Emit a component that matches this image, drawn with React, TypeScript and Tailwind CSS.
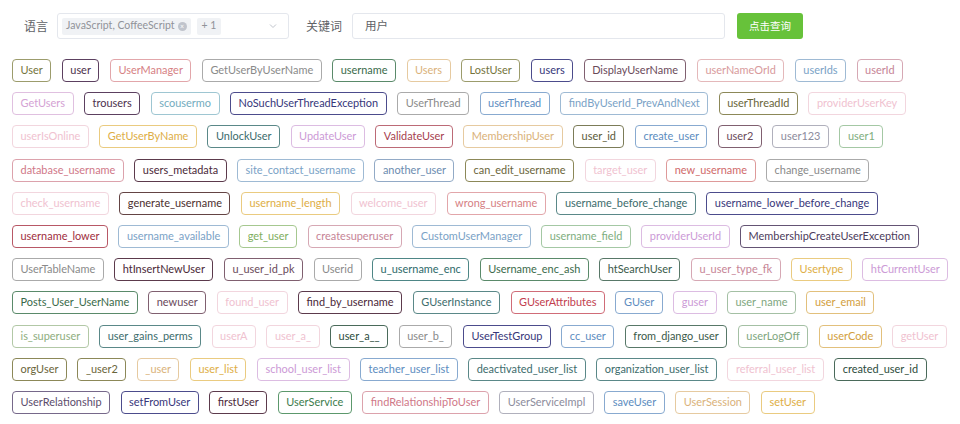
import React from 'react';

// palette: text + border per tone
const T: Record<string, string> = {
  olive: 'text-[#74743c] border-[#9c9c6c]',
  plum: 'text-[#4c304c] border-[#5c4060]',
  rose: 'text-[#d67f84] border-[#e2a6aa]',
  gray: 'text-[#8a8a8a] border-[#aaaaaa]',
  forest: 'text-[#3a6a4a] border-[#5a8a6a]',
  tan: 'text-[#dab27a] border-[#e6caa0]',
  navy: 'text-[#37377a] border-[#4c4c8c]',
  mauve: 'text-[#6a4a5a] border-[#806070]',
  blush: 'text-[#d89a9c] border-[#e4b8ba]',
  sky: 'text-[#7aa2c6] border-[#9ebad4]',
  orchid: 'text-[#c68496] border-[#d6a8b4]',
  lilac: 'text-[#d4a2d4] border-[#e0c0e0]',
  aqua: 'text-[#74acbe] border-[#9ec6d2]',
  blue: 'text-[#5c8cc0] border-[#88aad0]',
  khaki: 'text-[#6a653a] border-[#8c8858]',
  faint: 'text-[#f0c2d0] border-[#f2d6de]',
  gold: 'text-[#deae46] border-[#eacb80]',
  teal: 'text-[#3c6c6c] border-[#5a8888]',
  violet: 'text-[#cc9ad6] border-[#dcbce2]',
  red: 'text-[#a63e4e] border-[#bc6a76]',
  dolive: 'text-[#5c5c3a] border-[#7c7c58]',
  ash: 'text-[#8c8c9c] border-[#b0b0bc]',
  mint: 'text-[#7eae7e] border-[#a4c8a4]',
  pink: 'text-[#d07888] border-[#dca2ac]',
  wine: 'text-[#4a2838] border-[#5c3a4c]',
  slate: 'text-[#6c8cb0] border-[#92aac6]',
  coral: 'text-[#d06a6a] border-[#de9a9a]',
  brown: 'text-[#4c2e2e] border-[#644444]',
  crimson: 'text-[#a02e3e] border-[#b85866]',
  lime: 'text-[#7eae5e] border-[#a6c890]',
  grape: 'text-[#4c3c5c] border-[#645474]',
  dteal: 'text-[#2e6a6a] border-[#4e8686]',
  pine: 'text-[#3a5a4a] border-[#587868]',
  scarlet: 'text-[#c23e4e] border-[#d06c78]',
  sage: 'text-[#7ea67e] border-[#a4c0a4]',
  amber: 'text-[#d29e3c] border-[#e2c07c]',
  pale: 'text-[#8eae7e] border-[#b2c8a6]',
  dgreen: 'text-[#2c4c3c] border-[#4a6a5a]',
  violetgray: 'text-[#5c4c6c] border-[#76688a]',
  moss: 'text-[#3c7c4c] border-[#5c986c]',
};

const rows: [string, string][][] = [
  [['User', 'olive'], ['user', 'plum'], ['UserManager', 'rose'], ['GetUserByUserName', 'gray'], ['username', 'forest'], ['Users', 'tan'], ['LostUser', 'olive'], ['users', 'navy'], ['DisplayUserName', 'mauve'], ['userNameOrId', 'blush'], ['userIds', 'sky'], ['userId', 'orchid']],
  [['GetUsers', 'lilac'], ['trousers', 'plum'], ['scousermo', 'aqua'], ['NoSuchUserThreadException', 'navy'], ['UserThread', 'gray'], ['userThread', 'blue'], ['findByUserId_PrevAndNext', 'sky'], ['userThreadId', 'khaki'], ['providerUserKey', 'faint']],
  [['userIsOnline', 'faint'], ['GetUserByName', 'gold'], ['UnlockUser', 'teal'], ['UpdateUser', 'violet'], ['ValidateUser', 'red'], ['MembershipUser', 'tan'], ['user_id', 'dolive'], ['create_user', 'blue'], ['user2', 'mauve'], ['user123', 'ash'], ['user1', 'mint']],
  [['database_username', 'pink'], ['users_metadata', 'wine'], ['site_contact_username', 'sky'], ['another_user', 'slate'], ['can_edit_username', 'khaki'], ['target_user', 'faint'], ['new_username', 'coral'], ['change_username', 'gray']],
  [['check_username', 'faint'], ['generate_username', 'brown'], ['username_length', 'gold'], ['welcome_user', 'faint'], ['wrong_username', 'rose'], ['username_before_change', 'teal'], ['username_lower_before_change', 'navy']],
  [['username_lower', 'crimson'], ['username_available', 'sky'], ['get_user', 'lime'], ['createsuperuser', 'orchid'], ['CustomUserManager', 'sky'], ['username_field', 'mint'], ['providerUserId', 'violet'], ['MembershipCreateUserException', 'grape']],
  [['UserTableName', 'gray'], ['htInsertNewUser', 'wine'], ['u_user_id_pk', 'mauve'], ['Userid', 'gray'], ['u_username_enc', 'dteal'], ['Username_enc_ash', 'forest'], ['htSearchUser', 'pine'], ['u_user_type_fk', 'orchid'], ['Usertype', 'gold'], ['htCurrentUser', 'violet']],
  [['Posts_User_UserName', 'forest'], ['newuser', 'mauve'], ['found_user', 'faint'], ['find_by_username', 'wine'], ['GUserInstance', 'teal'], ['GUserAttributes', 'scarlet'], ['GUser', 'blue'], ['guser', 'violet'], ['user_name', 'sage'], ['user_email', 'amber']],
  [['is_superuser', 'pale'], ['user_gains_perms', 'teal'], ['userA', 'faint'], ['user_a_', 'faint'], ['user_a__', 'dgreen'], ['user_b_', 'gray'], ['UserTestGroup', 'navy'], ['cc_user', 'blue'], ['from_django_user', 'pine'], ['userLogOff', 'sage'], ['userCode', 'amber'], ['getUser', 'faint']],
  [['orgUser', 'khaki'], ['_user2', 'khaki'], ['_user', 'tan'], ['user_list', 'gold'], ['school_user_list', 'violet'], ['teacher_user_list', 'blue'], ['deactivated_user_list', 'teal'], ['organization_user_list', 'teal'], ['referral_user_list', 'faint'], ['created_user_id', 'dgreen']],
  [['UserRelationship', 'violetgray'], ['setFromUser', 'navy'], ['firstUser', 'wine'], ['UserService', 'moss'], ['findRelationshipToUser', 'pink'], ['UserServiceImpl', 'ash'], ['saveUser', 'blue'], ['UserSession', 'tan'], ['setUser', 'gold']],
];

function Tag({ text, tone }: { text: string; tone: string }) {
  return (
    <span className={`h-[23px] px-[7.5px] flex items-center border rounded-[4px] text-[10.95px] leading-none whitespace-nowrap ${T[tone]}`}>
      {text}
    </span>
  );
}

export default function App() {
  return (
    <div className="w-[960px] h-[424px] bg-white overflow-hidden font-['Lato','Noto_Sans_CJK_SC',sans-serif]">
      <div className="flex items-center pt-[13px] pl-[24px] h-[39px]">
        <span className="text-[12px] text-[#606266] font-['Noto_Sans_CJK_SC',sans-serif]">语言</span>
        <div className="ml-[9px] w-[232px] h-[26px] border border-[#e4e7ed] rounded-[3px] flex items-center pl-[4px] pr-[10px]">
          <span className="h-[17px] px-[4px] bg-[#f0f2f5] rounded-[2px] flex items-center gap-[3px] text-[10.5px] text-[#909399]">
            JavaScript, CoffeeScript
            <span className="w-[9px] h-[9px] rounded-full bg-[#c0c4cc] text-white text-[7px] leading-none flex items-center justify-center">×</span>
          </span>
          <span className="ml-[6px] h-[17px] px-[5px] bg-[#f0f2f5] rounded-[2px] flex items-center text-[10.5px] text-[#909399]">+ 1</span>
          <svg className="ml-auto" width="10" height="10" viewBox="0 0 10 10" fill="none" stroke="#c0c4cc" strokeWidth="1">
            <path d="M2 3.5 L5 6.5 L8 3.5" />
          </svg>
        </div>
        <span className="ml-[17px] text-[12px] text-[#606266] font-['Noto_Sans_CJK_SC',sans-serif]">关键词</span>
        <div className="ml-[10px] w-[373px] h-[26px] border border-[#e4e7ed] rounded-[3px] flex items-center pl-[12px] text-[11.5px] text-[#606266] font-['Noto_Sans_CJK_SC',sans-serif]">
          用户
        </div>
        <button className="ml-[12px] w-[66px] h-[26px] bg-[#67c23a] rounded-[3px] text-white text-[10.5px] font-['Noto_Sans_CJK_SC',sans-serif]">
          点击查询
        </button>
      </div>
      <div className="pl-[12px] pt-[20px] flex flex-col gap-y-[10.2px]">
        {rows.map((row, i) => (
          <div key={i} className="flex gap-x-[10.5px]">
            {row.map(([t, c]) => (
              <Tag key={t} text={t} tone={c} />
            ))}
          </div>
        ))}
      </div>
    </div>
  );
}
